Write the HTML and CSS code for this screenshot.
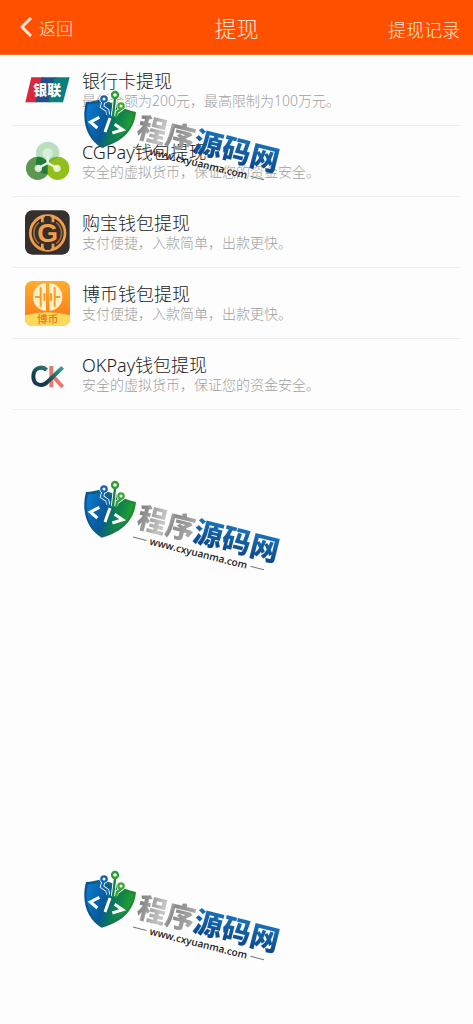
FILE: index.html
```html
<!DOCTYPE html>
<html lang="zh-CN">
<head>
    <meta charset="UTF-8">
    <meta name="viewport" content="width=device-width, initial-scale=1.0">
    <title>提现</title>
    <link rel="stylesheet" href="styles.css">
</head>
<body>
    <!-- shared shield logo for the watermarks -->
    <svg class="defs" aria-hidden="true">
        <defs>
            <linearGradient id="shield-fill" x1="0" y1="0.3" x2="1" y2="0.6">
                <stop offset="0" stop-color="#0a78cc"/>
                <stop offset="0.4" stop-color="#07589a"/>
                <stop offset="0.6" stop-color="#0b7a55"/>
                <stop offset="1" stop-color="#27a52c"/>
            </linearGradient>
            <linearGradient id="shield-edge" x1="0" y1="0" x2="1" y2="0">
                <stop offset="0" stop-color="#0b4f94"/>
                <stop offset="1" stop-color="#1f8f2a"/>
            </linearGradient>
            <symbol id="shield" viewBox="24 30 162 177">
                <path d="M33 66C50 66 64 62 78 58L130 76C145 86 162 92 183 96C180 132 160 182 80 203C40 180 17 130 33 66Z" fill="url(#shield-edge)"/>
                <path d="M39 73C54 73 66 70 78 66L128 83C143 92 158 98 175 102C170 134 152 175 81 195C46 174 25 128 39 73Z" fill="url(#shield-fill)"/>
                <g fill="none" stroke="#fff" stroke-width="12" stroke-linecap="round">
                    <path d="M85 66L81 80L97 91L99 100M120 56L114 104M138 88L126 96L123 104"/>
                    <circle cx="87" cy="57" r="8"/><circle cx="120" cy="45" r="9"/><circle cx="138" cy="78" r="8"/>
                </g>
                <g fill="#fff" stroke-width="7" stroke-linecap="round">
                    <path d="M85 66L81 80L97 91L99 103" fill="none" stroke="#1263b0"/>
                    <path d="M120 56L114 108" fill="none" stroke="#168445"/>
                    <path d="M138 88L126 96L123 110" fill="none" stroke="#2aa02e"/>
                    <circle cx="87" cy="57" r="8" stroke="#1263b0"/>
                    <circle cx="120" cy="45" r="9" stroke="#2b9d35"/>
                    <circle cx="138" cy="78" r="8" stroke="#3aaa32"/>
                </g>
                <path d="M73 112L46 126L67 144M105 114L90 156M119 133L143 149L112 159" fill="none" stroke="#fff" stroke-width="9"/>
            </symbol>
        </defs>
    </svg>

    <header class="topbar">
        <a class="back" href="#">
            <svg class="chevron" viewBox="0 0 12 20"><path d="M11 1L2 10L11 19" fill="none" stroke="#ffe6d6" stroke-width="3"/></svg>
            返回
        </a>
        <h1>提现</h1>
        <a class="records" href="#">提现记录</a>
    </header>

    <main>
        <ul class="methods">
            <li>
                <a href="#">
                    <svg class="icon" viewBox="30 10 135 135">
                        <path d="M49 38H86L67 113H31Z" fill="#d8283c"/>
                        <path d="M80 38H125L106 113H61Z" fill="#235089"/>
                        <path d="M119 38H164L144 113H100Z" fill="#0b7f7c"/>
                        <text x="55" y="90" class="union-text">银联</text>
                    </svg>
                    <div class="info">
                        <h2>银行卡提现</h2>
                        <p>最低金额为200元，最高限制为100万元。</p>
                    </div>
                </a>
            </li>
            <li>
                <a href="#">
                    <svg class="icon" viewBox="30 10 135 135">
                        <circle cx="98" cy="53" r="35" fill="#b9dfbf"/>
                        <circle cx="68" cy="98" r="35" fill="#5c9650"/>
                        <circle cx="128" cy="98" r="35" fill="#93bf1c"/>
                        <path d="M68 63A35 35 0 0 1 98 80V116A35 35 0 0 1 68 63Z" fill="#217a38"/>
                        <path d="M128 63A35 35 0 0 0 98 80A35 35 0 0 0 128 63Z" fill="#79b632"/>
                        <circle cx="98" cy="53" r="15" fill="#d9efdb"/>
                        <circle cx="70" cy="98" r="11" fill="#dce9d5"/>
                        <circle cx="126" cy="98" r="11" fill="#e6f1c5"/>
                        <path d="M98 62V82M70 97L98 82L126 97" fill="none" stroke="#eef8e8" stroke-width="7"/>
                    </svg>
                    <div class="info">
                        <h2>CGPay钱包提现</h2>
                        <p>安全的虚拟货币，保证您的资金安全。</p>
                    </div>
                </a>
            </li>
            <li>
                <a href="#">
                    <svg class="icon" viewBox="30 25 135 135">
                        <rect x="30" y="26" width="134" height="133" rx="22" fill="#35302e"/>
                        <circle cx="98" cy="94" r="52" fill="none" stroke="#f2a047" stroke-width="8"/>
                        <path d="M82 43V62M114 43V62M82 126V145M114 126V145" stroke="#f2a047" stroke-width="8"/>
                        <path d="M90 43h16v14h-16zM90 131h16v14h-16z" fill="#35302e"/>
                        <path d="M72 62A41 41 0 0 0 72 126M124 62A41 41 0 0 1 124 126" fill="none" stroke="#a8692f" stroke-width="5"/>
                        <text x="98" y="122" class="g-text">G</text>
                    </svg>
                    <div class="info">
                        <h2>购宝钱包提现</h2>
                        <p>支付便捷，入款简单，出款更快。</p>
                    </div>
                </a>
            </li>
            <li>
                <a href="#">
                    <svg class="icon" viewBox="30 25 135 135">
                        <defs>
                            <linearGradient id="bobi" x1="0" y1="0" x2="0" y2="1">
                                <stop offset="0" stop-color="#ffad2e"/>
                                <stop offset="1" stop-color="#fb7410"/>
                            </linearGradient>
                            <clipPath id="bobi-box"><rect x="30" y="25" width="135" height="135" rx="22"/></clipPath>
                        </defs>
                        <g clip-path="url(#bobi-box)">
                            <rect x="30" y="25" width="135" height="135" fill="url(#bobi)"/>
                            <path d="M30 128Q98 110 165 128V160H30Z" fill="#ffd95c"/>
                        </g>
                        <path d="M93 32A39 41 0 0 0 93 114ZM103 32A39 41 0 0 1 103 114Z" fill="#fff0cc"/>
                        <path d="M77 44V102M119 44V102M60 73H77M119 73H136M88 62V84M108 62V84" fill="none" stroke="#fb9a25" stroke-width="6"/>
                        <text x="98" y="151" class="bobi-text">博币</text>
                    </svg>
                    <div class="info">
                        <h2>博币钱包提现</h2>
                        <p>支付便捷，入款简单，出款更快。</p>
                    </div>
                </a>
            </li>
            <li>
                <a href="#">
                    <svg class="icon" viewBox="30 10 135 135">
                        <defs>
                            <linearGradient id="ck" x1="0" y1="1" x2="1" y2="0">
                                <stop offset="0.3" stop-color="#163b4d"/>
                                <stop offset="1" stop-color="#35a58d"/>
                            </linearGradient>
                        </defs>
                        <path d="M109 52V116M116 85L143 115" fill="none" stroke="#e5796c" stroke-width="12"/>
                        <path d="M95 64C82 51 55 56 55 84C55 112 84 115 98 99L143 56" fill="none" stroke="url(#ck)" stroke-width="12"/>
                    </svg>
                    <div class="info">
                        <h2>OKPay钱包提现</h2>
                        <p>安全的虚拟货币，保证您的资金安全。</p>
                    </div>
                </a>
            </li>
        </ul>
    </main>

    <div class="watermark first">
        <svg class="shield"><use href="#shield"/></svg>
        <div class="brand">
            <div class="name"><span class="silver">程序</span><span class="blue">源码网</span></div>
            <div class="site">www.cxyuanma.com</div>
        </div>
    </div>
    <div class="watermark second">
        <svg class="shield"><use href="#shield"/></svg>
        <div class="brand">
            <div class="name"><span class="silver">程序</span><span class="blue">源码网</span></div>
            <div class="site">www.cxyuanma.com</div>
        </div>
    </div>
    <div class="watermark third">
        <svg class="shield"><use href="#shield"/></svg>
        <div class="brand">
            <div class="name"><span class="silver">程序</span><span class="blue">源码网</span></div>
            <div class="site">www.cxyuanma.com</div>
        </div>
    </div>
</body>
</html>
```
FILE: styles.css
```css
* {
    box-sizing: border-box;
}
body {
    margin: 0;
    min-height: 100vh;
    position: relative;
    background-color: #fdfdfd;
    font-family: "Noto Sans", "Noto Sans CJK SC", sans-serif;
    font-weight: 300;
}
a {
    color: inherit;
    text-decoration: none;
}
h1, h2, p, ul {
    margin: 0;
    padding: 0;
    font-weight: 300;
}
.defs {
    position: absolute;
    width: 0;
    height: 0;
}

/* header */
.topbar {
    display: grid;
    grid-template-columns: 1fr auto 1fr;
    align-items: center;
    height: 55px;
    padding: 0 13px;
    background-color: #ff5000;
    border-bottom: 1px solid #e9702f;
    color: #ffe6d6;
    font-size: 18px;
}
.topbar h1 {
    font-size: 22px;
}
.back {
    display: flex;
    align-items: center;
    gap: 7px;
    padding-left: 7px;
    font-size: 17px;
}
.chevron {
    width: 12px;
    height: 20px;
}
.records {
    padding-top: 3px;
    text-align: right;
}

/* list */
.methods {
    margin: 0 12px;
    list-style: none;
}
.methods li {
    border-bottom: 1px solid #eee;
}
.methods a {
    display: flex;
    align-items: center;
    gap: 12px;
    height: 70px;
    padding-left: 13px;
}
.icon {
    width: 45px;
    height: 45px;
    flex: none;
}
.info {
    padding-top: 2px;
}
.info h2 {
    font-size: 18px;
    line-height: 20px;
    color: #222;
}
.info p {
    font-size: 14px;
    line-height: 20px;
    color: #a0a0a0;
    white-space: nowrap;
}
.union-text {
    font-size: 42px;
    font-weight: 900;
    fill: #fff;
}
.g-text {
    font-family: "Liberation Sans", sans-serif;
    font-size: 80px;
    font-weight: 700;
    fill: #f2a047;
    text-anchor: middle;
}
.bobi-text {
    font-size: 32px;
    font-weight: 500;
    fill: #e8741a;
    text-anchor: middle;
}

/* watermark */
.watermark {
    position: absolute;
    left: 83px;
    display: flex;
    pointer-events: none;
}
.first {
    top: 90px;
}
.second {
    top: 480px;
}
.third {
    top: 870px;
}
.shield {
    width: 54px;
    height: 59px;
}
.brand {
    margin-top: 20px;
    transform: rotate(14deg);
    transform-origin: 0 50%;
}
.name {
    font-size: 29px;
    line-height: 32px;
    font-weight: 900;
    white-space: nowrap;
}
.silver {
    background: linear-gradient(100deg, #777, #c8c8c8 45%, #8a8a8a 60%, #b0b0b0);
    -webkit-background-clip: text;
    background-clip: text;
    color: transparent;
}
.blue {
    background: linear-gradient(#1d7cc4, #0a3f80);
    -webkit-background-clip: text;
    background-clip: text;
    color: transparent;
}
.site {
    display: flex;
    align-items: center;
    gap: 3px;
    padding-right: 10px;
    font-family: "Open Sans", sans-serif;
    font-size: 10px;
    line-height: 10px;
    font-weight: 600;
    color: #222;
}
.site::before, .site::after {
    content: "";
    flex: 1;
    height: 1px;
    background-color: #777;
}
```
